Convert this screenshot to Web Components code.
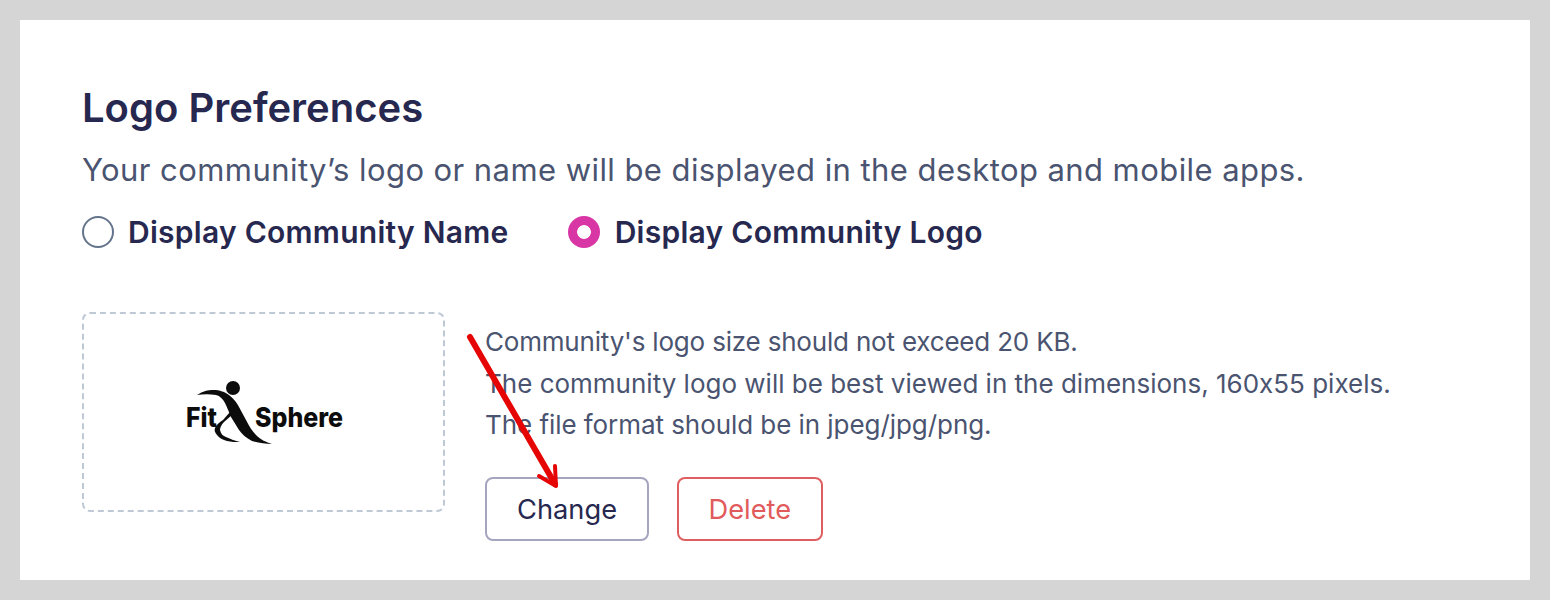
<!DOCTYPE html>
<html>
<head>
<meta charset="utf-8">
<style>
  html, body { margin: 0; height: 100%; }
  body { background: #d5d5d5; font-family: "Inter", "Liberation Sans", sans-serif; font-feature-settings: "calt" 0; }
</style>
</head>
<body>
<logo-preferences></logo-preferences>

<template id="radio-option-tpl">
  <style>
    :host { display: inline-flex; align-items: center; gap: 14px; }
    :host([checked]) { gap: 15px; }
    .dot { width: 32px; height: 32px; box-sizing: border-box; border-radius: 50%; border: 2px solid #64748b; background: #fff; }
    :host([checked]) .dot { border: none; background: radial-gradient(circle, #fff 6.5px, #d936a5 7.2px); }
    .text { font-size: 30px; font-weight: 600; color: #27284f; letter-spacing: 0.27px; }
  </style>
  <span class="dot"></span>
  <span class="text"><slot></slot></span>
</template>

<template id="logo-box-tpl">
  <style>
    :host { display: flex; align-items: center; justify-content: center; box-sizing: border-box; width: 363px; height: 200px; border: 2px dashed #bfc9d6; border-radius: 8px; flex: none; }
    svg { display: block; width: 189px; height: 68px; }
    text { font-family: "Inter", sans-serif; font-weight: 800; font-size: 27px; fill: #0c0c0c; }
  </style>
  <svg viewBox="169 378 189 68">
    <circle cx="233" cy="388" r="7" fill="#0c0c0c"/>
    <path fill="#0c0c0c" d="M197 395C203 391 208 390 213 390C220 390 225 392 229 395C234 399 237 403 239 407L246 420C249 426 252 431 256 435C261 440 266 442 272 444C265 444 258 443 252 441C246 438 242 434 239 430L231 417C229 412 227 407 225 403C223 399 220 396 216 395C210 394 203 394 197 395Z"/>
    <path fill="#0c0c0c" d="M232 415L224 422C221 425 220 428 220 430C221 434 223 436 226 437C231 439 235 441 240 442C236 442 231 442 227 441C223 440 219 438 217 435C215 433 214 430 215 428C217 424 220 422 223 420L230 412Z"/>
    <text x="186" y="427" textLength="31" lengthAdjust="spacingAndGlyphs">Fit</text>
    <text x="255" y="427" textLength="88" lengthAdjust="spacingAndGlyphs">Sphere</text>
  </svg>
</template>

<template id="outline-button-tpl">
  <style>
    :host { display: inline-flex; align-items: center; justify-content: center; box-sizing: border-box; height: 64px; padding: 1px 30px 0; border: 2px solid #a5a5c0; border-radius: 8px; font-size: 27.25px; color: #27284f; background: #fff; }
    :host([danger]) { border-color: #df5f60; color: #e15a5c; padding: 1px 29.5px 0; }
  </style>
  <slot></slot>
</template>

<template id="logo-preferences-tpl">
  <style>
    :host { display: block; position: relative; padding: 20px; height: 600px; box-sizing: border-box; }
    .card { background: #fff; height: 100%; box-sizing: border-box; padding: 65px 62px 0; }
    h2 { margin: 0; font-size: 40px; line-height: 46px; font-weight: 600; color: #27284f; }
    .lead { margin: 19px 0 0; font-size: 31px; line-height: 40px; letter-spacing: 0.43px; color: #4a5470; }
    .options { display: flex; gap: 59px; margin-top: 22px; height: 40px; align-items: center; }
    .upload { display: flex; gap: 40px; margin-top: 60px; }
    .hints { margin: 9px 0 0; font-size: 26px; line-height: 41.5px; color: #4a5470; }
    .hints .one { letter-spacing: -0.19px; }
    .hints .three { letter-spacing: -0.06px; }
    .actions { display: flex; gap: 28px; margin-top: 31px; }
    .arrow { position: absolute; left: 0; top: 0; pointer-events: none; }
  </style>
  <div class="card">
    <h2>Logo Preferences</h2>
    <p class="lead">Your community’s logo or name will be displayed in the desktop and mobile apps.</p>
    <div class="options">
      <radio-option>Display Community Name</radio-option>
      <radio-option checked>Display Community Logo</radio-option>
    </div>
    <div class="upload">
      <logo-box></logo-box>
      <div>
        <div class="hints">
          <div class="one">Community's logo size should not exceed 20 KB.</div>
          <div>The community logo will be best viewed in the dimensions, 160x55 pixels.</div>
          <div class="three">The file format should be in jpeg/jpg/png.</div>
        </div>
        <div class="actions">
          <outline-button>Change</outline-button>
          <outline-button danger>Delete</outline-button>
        </div>
      </div>
    </div>
  </div>
  <svg class="arrow" width="1550" height="600" viewBox="0 0 1550 600">
    <path d="M470 337L555 484" stroke="#e60505" stroke-width="6" stroke-linecap="round" fill="none"/>
    <path d="M539 476L556 486L555 466" stroke="#e60505" stroke-width="4" stroke-linecap="round" stroke-linejoin="round" fill="none"/>
  </svg>
</template>

<script>
function stamp(host, id) {
  const root = host.attachShadow({ mode: "open" });
  root.appendChild(document.getElementById(id).content.cloneNode(true));
}

class RadioOption extends HTMLElement {
  constructor() { super(); stamp(this, "radio-option-tpl"); }
}
class LogoBox extends HTMLElement {
  constructor() { super(); stamp(this, "logo-box-tpl"); }
}
class OutlineButton extends HTMLElement {
  constructor() { super(); stamp(this, "outline-button-tpl"); }
}
class LogoPreferences extends HTMLElement {
  constructor() { super(); stamp(this, "logo-preferences-tpl"); }
}

customElements.define("radio-option", RadioOption);
customElements.define("logo-box", LogoBox);
customElements.define("outline-button", OutlineButton);
customElements.define("logo-preferences", LogoPreferences);
</script>
</body>
</html>
